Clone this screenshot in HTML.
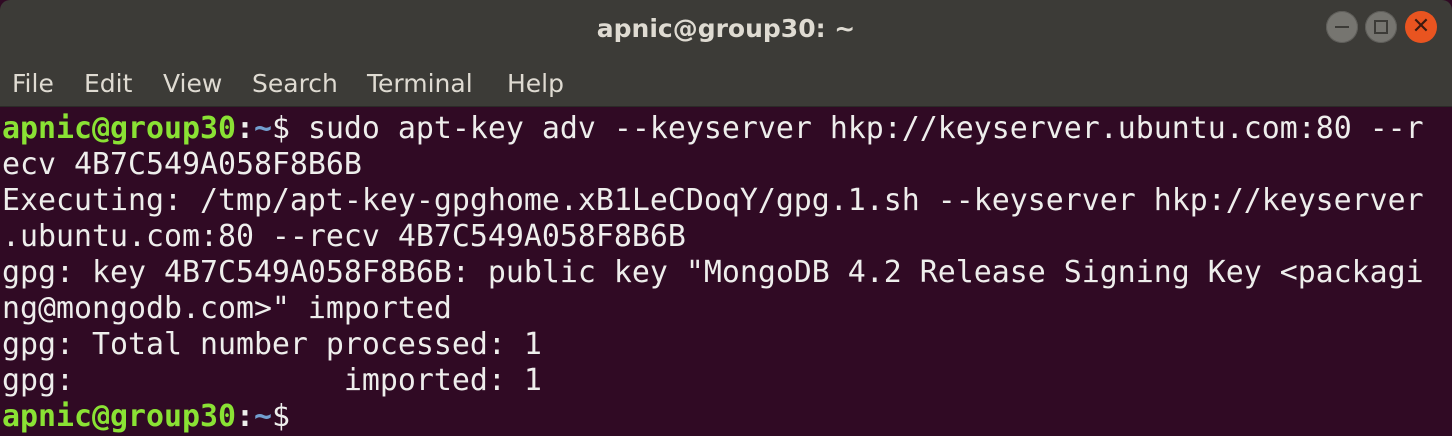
<!DOCTYPE html><html><head><style>
body{margin:0;width:1452px;height:436px;overflow:hidden;background:#300a24;font-family:"DejaVu Sans",sans-serif}
.title{position:absolute;left:0;top:0;width:1452px;height:60px;background:#3c3b37;border-radius:10px 10px 0 0;color:#dfdbd2;font-weight:bold;font-size:25px;text-align:center;line-height:58px}
.menu{position:absolute;left:0;top:60px;width:1452px;height:46px;background:#3c3b37;color:#dfdbd2;font-size:25px;line-height:48px;border-bottom:1px solid #2b2a27}
.menu span{position:absolute}
.btn{position:absolute;top:11px;width:32px;height:32px;border-radius:50%;background:#767570;box-shadow:inset 0 0 0 1px #5e5d59}
pre{position:absolute;left:2px;top:111px;margin:0;font-family:"DejaVu Sans Mono","Liberation Mono",monospace;font-size:29.9px;line-height:36px;color:#eeeeec}
.g{color:#8ae234;font-weight:bold}.b{color:#729fcf;font-weight:bold}.w{font-weight:bold}
</style></head><body>
<div class="title">apnic@group30: ~</div>
<div class="btn" style="left:1326px"><div style="position:absolute;left:9px;top:15px;width:14px;height:2px;background:#3c3b37"></div></div>
<div class="btn" style="left:1365px"><div style="position:absolute;left:9px;top:9px;width:10px;height:10px;border:2px solid #3c3b37"></div></div>
<div class="btn" style="left:1405px;background:#e95420;box-shadow:none;color:#3c1a10;font-size:22px;text-align:center;line-height:32px">✕</div>
<div class="menu"><span style="left:12px">File</span><span style="left:84px">Edit</span><span style="left:163px">View</span><span style="left:252px">Search</span><span style="left:367px">Terminal</span><span style="left:507px">Help</span></div>
<pre><span class="g">apnic@group30</span><span class="w">:</span><span class="b">~</span>$ sudo apt-key adv --keyserver hkp://keyserver.ubuntu.com:80 --r
ecv 4B7C549A058F8B6B
Executing: /tmp/apt-key-gpghome.xB1LeCDoqY/gpg.1.sh --keyserver hkp://keyserver
.ubuntu.com:80 --recv 4B7C549A058F8B6B
gpg: key 4B7C549A058F8B6B: public key "MongoDB 4.2 Release Signing Key &lt;packagi
ng@mongodb.com&gt;" imported
gpg: Total number processed: 1
gpg:               imported: 1
<span class="g">apnic@group30</span><span class="w">:</span><span class="b">~</span>$</pre>
</body></html>
